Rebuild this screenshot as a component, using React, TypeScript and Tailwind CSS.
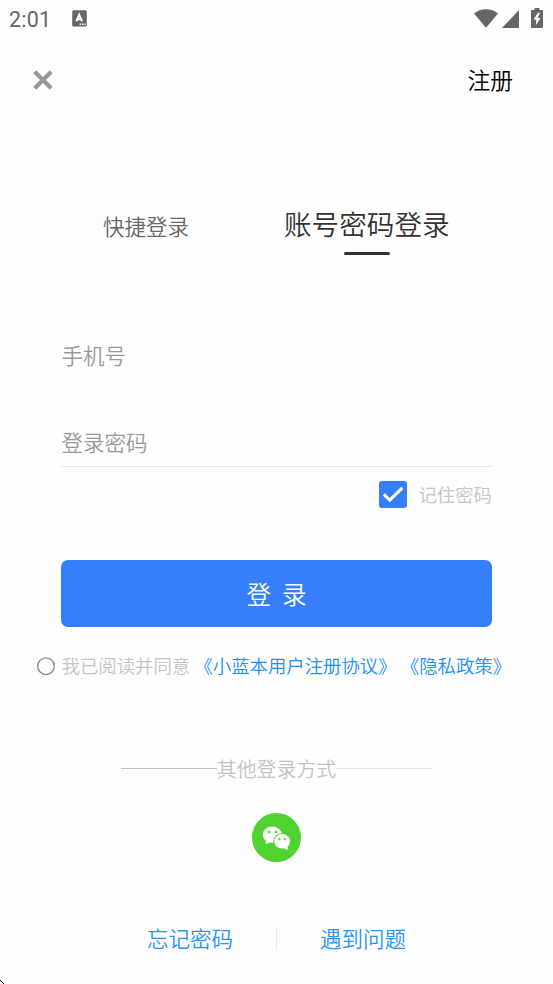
import { useState } from 'react';

function StatusBar() {
  return (
    <div className="flex h-[37px] items-center justify-between pl-[9px] pr-[10px] text-[#666666]">
      <div className="flex items-center">
        <span className="w-[63px] pt-[2px] font-['Roboto',sans-serif] text-[21.5px] font-normal leading-[37px] tracking-[0.2px]">2:01</span>
        <svg width="15" height="17" viewBox="0 0 15 17">
          <rect x="0.2" y="0.3" width="14.6" height="16.2" rx="1.6" fill="currentColor" />
          <path d="M4.3 11.4 7.2 4.6l2.9 6.8M5.3 9.2h3.8" fill="none" stroke="#fff" strokeWidth="1.9" />
          <path d="M7.6 14.2h1.5M10 14.2h1.5M12.4 14.2h1.2" stroke="#fff" strokeWidth="1.4" />
        </svg>
      </div>
      <div className="flex items-center">
        <svg width="24" height="19" viewBox="0 0 24 19" className="mr-[4px]">
          <path d="M0 4.4C3.3 1.7 7.4 0.2 12 0.2s8.7 1.5 12 4.2L12 18.8z" fill="currentColor" />
        </svg>
        <svg width="17" height="18" viewBox="0 0 17 18" className="mr-[12px]">
          <path d="M17 0v18H0z" fill="currentColor" />
        </svg>
        <svg width="12" height="20" viewBox="0 0 12 20" className="-mt-[2px]">
          <path d="M3.6 0h4.8v2H11q1 0 1 1v16q0 1-1 1H1q-1 0-1-1V3q0-1 1-1h2.6z" fill="currentColor" />
          <path d="M7 4.8 2.6 11.6h2.5v5.4L9.5 9.9H6.8L9 4.8z" fill="#fff" />
        </svg>
      </div>
    </div>
  );
}

function WechatIcon() {
  return (
    <svg width="49" height="49" viewBox="0 0 49 49">
      <circle cx="24.5" cy="24.5" r="24.5" fill="#50d22f" />
      <ellipse cx="20.3" cy="21.7" rx="9.6" ry="8.1" fill="#fff" />
      <path d="M14 26.5l-.3 4.8 5-2.2z" fill="#fff" />
      <ellipse cx="30.2" cy="28.3" rx="8.9" ry="8.1" fill="#50d22f" />
      <ellipse cx="30.2" cy="28.3" rx="8" ry="7.3" fill="#fff" />
      <path d="M31.5 35.2l4.2 1.7-.2-4.4z" fill="#fff" />
      <g fill="#50d22f">
        <circle cx="17" cy="19" r="1.3" />
        <circle cx="24" cy="19" r="1.3" />
        <circle cx="27.4" cy="26.2" r="1.1" />
        <circle cx="32.8" cy="26.2" r="1.1" />
      </g>
    </svg>
  );
}

export default function App() {
  const [remember, setRemember] = useState(true);

  return (
    <div className="relative h-[984px] w-[553px] overflow-hidden bg-[#fefefe] font-['Noto_Sans_CJK_SC',sans-serif] font-[350]">
      <StatusBar />

      <header className="flex h-[86px] items-center justify-between pl-[33px] pr-[40px]">
        <button aria-label="close">
          <svg width="20" height="20" viewBox="0 0 20 20" className="text-[#999999]">
            <path d="M1.8 1.8l16.4 16.4M18.2 1.8L1.8 18.2" stroke="currentColor" strokeWidth="4.2" />
          </svg>
        </button>
        <button className="text-[22.8px] leading-[34px] text-black">注册</button>
      </header>

      <nav className="mt-[75px] flex h-[57px] items-start pl-[103px]">
        <button className="mt-[12px] text-[21.5px] leading-[32px] text-[#666666]">快捷登录</button>
        <button className="ml-[95px] mt-[5px] flex flex-col items-center text-[27.6px] leading-[40px] text-[#333333]">
          账号密码登录
          <span className="mt-[9px] h-[3px] w-[46px] rounded-full bg-[#333333]" />
        </button>
      </nav>

      <form className="mt-[77px] px-[61px]" onSubmit={(e) => e.preventDefault()}>
        <div className="flex h-[49px] items-center border-b border-[#fafafa] pb-[2px] pl-[0.5px] text-[21.5px] leading-[32px] text-[#999999]">
          手机号
        </div>
        <div className="mt-[37px] flex h-[49px] items-center border-b border-[#e8e8e8] pl-[0.5px] text-[21.5px] leading-[32px] text-[#999999]">
          登录密码
        </div>

        <div className="mt-[14px] flex h-[27px] items-center justify-end">
          <button
            type="button"
            aria-label="remember"
            onClick={() => setRemember(!remember)}
            className="mr-[11px] h-[27px] w-[28px] rounded-[3px] bg-[#367ffc]"
          >
            {remember && (
              <svg width="28" height="27" viewBox="0 0 28 27">
                <path d="M4.8 13.4l6 5.7L23.3 6.9" fill="none" stroke="#fff" strokeWidth="3" />
              </svg>
            )}
          </button>
          <span className="text-[18.4px] leading-[27px] text-[#c4c4c4]">记住密码</span>
        </div>

        <button className="mt-[52px] h-[67px] w-full rounded-[7px] bg-[#367ffc] text-[24.5px] leading-[67px] text-white whitespace-pre">
          登  录
        </button>
      </form>

      <div className="mt-[25px] flex h-[28px] items-center pl-[37px] text-[18.4px] leading-[28px] whitespace-nowrap">
        <svg width="18" height="19" viewBox="0 0 18 19" className="mr-[6px] shrink-0">
          <circle cx="9" cy="9.2" r="8.3" fill="none" stroke="#8c8c8c" strokeWidth="1.4" />
        </svg>
        <p className="-mt-[2px] pl-[0.5px] text-[#c4c4c4]">
          我已阅读并同意 <a className="text-[#2090ff]">《小蓝本用户注册协议》</a> <a className="text-[#2090ff]">《隐私政策》</a>
        </p>
      </div>

      <div className="mt-[74px] flex h-[30px] items-center justify-center text-[19.9px] leading-[30px] text-[#c4c4c4]">
        <span className="mb-[2px] h-px w-[96px] bg-[#c4c4c4]" />
        其他登录方式
        <span className="mb-[2px] h-px w-[96px] bg-[#e4e4e4]" />
      </div>

      <div className="mt-[29px] flex justify-center">
        <WechatIcon />
      </div>

      <footer className="mt-[60px] flex h-[32px] items-center justify-center text-[21.5px] leading-[32px] text-[#2396fb]">
        <a>忘记密码</a>
        <span className="mx-[43px] h-[23px] w-px bg-[#ebebeb]" />
        <a>遇到问题</a>
      </footer>

      {/* tip of the mouse pointer in the corner */}
      <svg width="5" height="5" viewBox="0 0 5 5" className="absolute bottom-0 left-0">
        <path d="M0 1h1v1H0zM1 2h1v1H1zM2 3h1v1H2zM3 4h1v1H3z" fill="#000" />
      </svg>
    </div>
  );
}
